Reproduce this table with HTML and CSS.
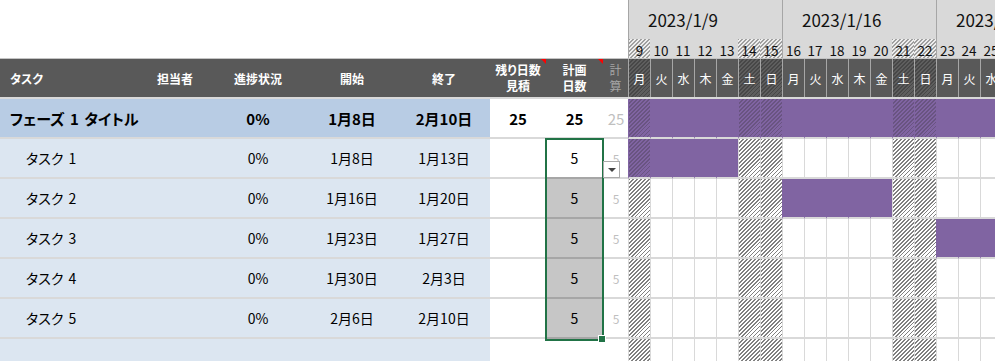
FILE: index.html
```html
<!DOCTYPE html>
<html lang="ja">
<head>
<meta charset="utf-8">
<title>ガントチャート</title>
<link rel="stylesheet" href="styles.css">
</head>
<body>
<div class="sheet">
  <div class="top">
    <div class="blank"></div>
    <div class="week">2023/1/9</div>
    <div class="week">2023/1/16</div>
    <div class="week last">2023/1/23</div>
    <div class="dn wk h">9</div><div class="dn">10</div><div class="dn">11</div><div class="dn">12</div><div class="dn">13</div><div class="dn h">14</div><div class="dn h">15</div>
    <div class="dn wk">16</div><div class="dn">17</div><div class="dn">18</div><div class="dn">19</div><div class="dn">20</div><div class="dn h">21</div><div class="dn h">22</div>
    <div class="dn wk">23</div><div class="dn">24</div><div class="dn">25</div>
  </div>

  <div class="row hdr">
    <div class="hc left">タスク</div>
    <div class="hc">担当者</div>
    <div class="hc">進捗状況</div>
    <div class="hc">開始</div>
    <div class="hc">終了</div>
    <div class="hc two note">残り日数<br>見積</div>
    <div class="hc two note">計画<br>日数</div>
    <div class="hc two muted">計<br>算</div>
    <div class="dw h">月</div><div class="dw">火</div><div class="dw">水</div><div class="dw">木</div><div class="dw">金</div><div class="dw h">土</div><div class="dw h">日</div>
    <div class="dw">月</div><div class="dw">火</div><div class="dw">水</div><div class="dw">木</div><div class="dw">金</div><div class="dw h">土</div><div class="dw h">日</div>
    <div class="dw">月</div><div class="dw">火</div><div class="dw">水</div>
  </div>

  <div class="row phase">
    <div class="c pb name">フェーズ 1 タイトル</div>
    <div class="c pb"></div>
    <div class="c pb ctr">0%</div>
    <div class="c pb ctr">1月8日</div>
    <div class="c pb ctr">2月10日</div>
    <div class="c ctr">25</div>
    <div class="c ctr">25</div>
    <div class="c ctr calc">25</div>
    <div class="d bar h"></div><div class="d bar"></div><div class="d bar"></div><div class="d bar"></div><div class="d bar"></div><div class="d bar h"></div><div class="d bar h"></div>
    <div class="d bar"></div><div class="d bar"></div><div class="d bar"></div><div class="d bar"></div><div class="d bar"></div><div class="d bar h"></div><div class="d bar h"></div>
    <div class="d bar"></div><div class="d bar"></div><div class="d bar"></div>
  </div>

  <div class="row task">
    <div class="c tb name">タスク 1</div>
    <div class="c tb"></div>
    <div class="c tb ctr">0%</div>
    <div class="c tb ctr">1月8日</div>
    <div class="c tb ctr">1月13日</div>
    <div class="c"></div>
    <div class="c ctr active">5</div>
    <div class="c ctr calc">5</div>
    <div class="d bar h"></div><div class="d bar"></div><div class="d bar"></div><div class="d bar"></div><div class="d bar"></div><div class="d h"></div><div class="d h"></div>
    <div class="d"></div><div class="d"></div><div class="d"></div><div class="d"></div><div class="d"></div><div class="d h"></div><div class="d h"></div>
    <div class="d"></div><div class="d"></div><div class="d"></div>
  </div>

  <div class="row task">
    <div class="c tb name">タスク 2</div>
    <div class="c tb"></div>
    <div class="c tb ctr">0%</div>
    <div class="c tb ctr">1月16日</div>
    <div class="c tb ctr">1月20日</div>
    <div class="c"></div>
    <div class="c ctr sel">5</div>
    <div class="c ctr calc">5</div>
    <div class="d h"></div><div class="d"></div><div class="d"></div><div class="d"></div><div class="d"></div><div class="d h"></div><div class="d h"></div>
    <div class="d bar"></div><div class="d bar"></div><div class="d bar"></div><div class="d bar"></div><div class="d bar"></div><div class="d h"></div><div class="d h"></div>
    <div class="d"></div><div class="d"></div><div class="d"></div>
  </div>

  <div class="row task">
    <div class="c tb name">タスク 3</div>
    <div class="c tb"></div>
    <div class="c tb ctr">0%</div>
    <div class="c tb ctr">1月23日</div>
    <div class="c tb ctr">1月27日</div>
    <div class="c"></div>
    <div class="c ctr sel">5</div>
    <div class="c ctr calc">5</div>
    <div class="d h"></div><div class="d"></div><div class="d"></div><div class="d"></div><div class="d"></div><div class="d h"></div><div class="d h"></div>
    <div class="d"></div><div class="d"></div><div class="d"></div><div class="d"></div><div class="d"></div><div class="d h"></div><div class="d h"></div>
    <div class="d bar"></div><div class="d bar"></div><div class="d bar"></div>
  </div>

  <div class="row task">
    <div class="c tb name">タスク 4</div>
    <div class="c tb"></div>
    <div class="c tb ctr">0%</div>
    <div class="c tb ctr">1月30日</div>
    <div class="c tb ctr">2月3日</div>
    <div class="c"></div>
    <div class="c ctr sel">5</div>
    <div class="c ctr calc">5</div>
    <div class="d h"></div><div class="d"></div><div class="d"></div><div class="d"></div><div class="d"></div><div class="d h"></div><div class="d h"></div>
    <div class="d"></div><div class="d"></div><div class="d"></div><div class="d"></div><div class="d"></div><div class="d h"></div><div class="d h"></div>
    <div class="d"></div><div class="d"></div><div class="d"></div>
  </div>

  <div class="row task">
    <div class="c tb name">タスク 5</div>
    <div class="c tb"></div>
    <div class="c tb ctr">0%</div>
    <div class="c tb ctr">2月6日</div>
    <div class="c tb ctr">2月10日</div>
    <div class="c"></div>
    <div class="c ctr sel">5</div>
    <div class="c ctr calc">5</div>
    <div class="d h"></div><div class="d"></div><div class="d"></div><div class="d"></div><div class="d"></div><div class="d h"></div><div class="d h"></div>
    <div class="d"></div><div class="d"></div><div class="d"></div><div class="d"></div><div class="d"></div><div class="d h"></div><div class="d h"></div>
    <div class="d"></div><div class="d"></div><div class="d"></div>
  </div>

  <div class="row task">
    <div class="c tb"></div>
    <div class="c tb"></div>
    <div class="c tb"></div>
    <div class="c tb"></div>
    <div class="c tb"></div>
    <div class="c"></div>
    <div class="c"></div>
    <div class="c"></div>
    <div class="d h"></div><div class="d"></div><div class="d"></div><div class="d"></div><div class="d"></div><div class="d h"></div><div class="d h"></div>
    <div class="d"></div><div class="d"></div><div class="d"></div><div class="d"></div><div class="d"></div><div class="d h"></div><div class="d h"></div>
    <div class="d"></div><div class="d"></div><div class="d"></div>
  </div>

  <div class="selection"></div>
  <div class="handle"></div>
  <div class="dropdown"><span class="caret"></span></div>
</div>
</body>
</html>
```

FILE: styles.css
```css
* { box-sizing: border-box; margin: 0; padding: 0; }
html, body { width: 995px; height: 361px; overflow: hidden; background: #fff; }
body {
  font-family: "Noto Sans CJK JP", "Noto Sans", sans-serif;
  font-feature-settings: "palt";
  color: #000;
}
.sheet { position: relative; width: 1002px; display: flex; flex-direction: column; }

.top, .row {
  display: grid;
  grid-template-columns: 140px 70px 96px 92px 92px 56px 57px 25px repeat(17, 22px);
}

/* calendar header */
.top { grid-template-rows: 39px 19px; }
.blank { grid-column: 1 / 9; grid-row: 1 / 3; background: #fff; }
.week {
  grid-column: span 7;
  background: #d9d9d9;
  border-left: 1px solid #a6a6a6;
  padding-left: 19px;
  display: flex; align-items: center;
  font-size: 17px; color: #111;
  white-space: nowrap; overflow: hidden;
}
.week.last { grid-column: span 3; }
.dn {
  background: #d9d9d9;
  display: flex; align-items: center; justify-content: center;
  font-size: 13.5px; color: #111; padding-top: 2px;
}
.dn.wk { border-left: 1px solid #a6a6a6; }
.dn.h { background: repeating-linear-gradient(135deg, #a0a0a0 0 1px, #eeeeee 1px 2.8px); }

/* table header */
.hdr {
  height: 41px;
  background: #595959;
  border-top: 1px solid #c4c4c4;
  border-bottom: 2px solid #d9d9d9;
}
.hc {
  position: relative;
  display: flex; align-items: center; justify-content: center; text-align: center;
  color: #fff; font-size: 12px; font-weight: 700;
}
.hc.left { justify-content: flex-start; padding-left: 10px; }
.hc.two { line-height: 16px; }
.hc.muted { color: #a6a6a6; font-weight: 400; font-size: 12px; line-height: 16px; }
.hc.note::after {
  content: ""; position: absolute; top: 0; right: 0;
  border-top: 5px solid #ff0000; border-left: 5px solid transparent;
}
.dw {
  display: flex; align-items: center; justify-content: center;
  color: #fff; font-size: 12px;
  border-left: 1px solid #a6a6a6;
}
.dw.h { background: repeating-linear-gradient(135deg, #474747 0 1px, #5e5e5e 1px 2.8px); }

/* body rows */
.row.phase, .row.task { height: 40px; }
.c {
  display: flex; align-items: center;
  border-bottom: 2px solid #d9d9d9;
  font-size: 14px; white-space: nowrap;
  word-spacing: 2px;
}
.ctr { justify-content: center; }
.pb { background: #b8cce4; }
.phase .c { font-weight: 700; font-size: 15px; }
.tb { background: #dce6f1; }
.name { padding-left: 10px; }
.task .name { padding-left: 26px; }
.calc { color: #bfbfbf; font-size: 12px; font-weight: 400 !important; padding-left: 1px; }
.active { border-bottom-color: #a6a6a6; }
.sel { background: #c6c6c6; border-bottom-color: #a6a6a6; }

.d {
  border-left: 1px solid #d9d9d9;
  border-bottom: 2px solid #d9d9d9;
}
.d.h { background-image: repeating-linear-gradient(135deg, rgba(85, 85, 85, 0.75) 0 1px, transparent 1px 2.8px); }
.d.bar { background-color: #8064a2; border-left-color: #8064a2; }
.d.bar.h { background-image: repeating-linear-gradient(135deg, rgba(70, 60, 80, 0.4) 0 1px, transparent 1px 2.8px); }

/* overlays */
.selection {
  position: absolute; left: 545px; top: 138px; width: 59px; height: 203px;
  border: 2px solid #217346;
}
.handle {
  position: absolute; left: 598px; top: 335px; width: 8px; height: 8px;
  background: #217346; border: 1px solid #fff;
}
.dropdown {
  position: absolute; left: 603px; top: 161px; width: 17px; height: 17px;
  background: #fff; border: 1px solid #ababab;
  display: flex; align-items: center; justify-content: center;
}
.caret {
  width: 0; height: 0;
  border-left: 4px solid transparent; border-right: 4px solid transparent;
  border-top: 4px solid #444;
}
```
